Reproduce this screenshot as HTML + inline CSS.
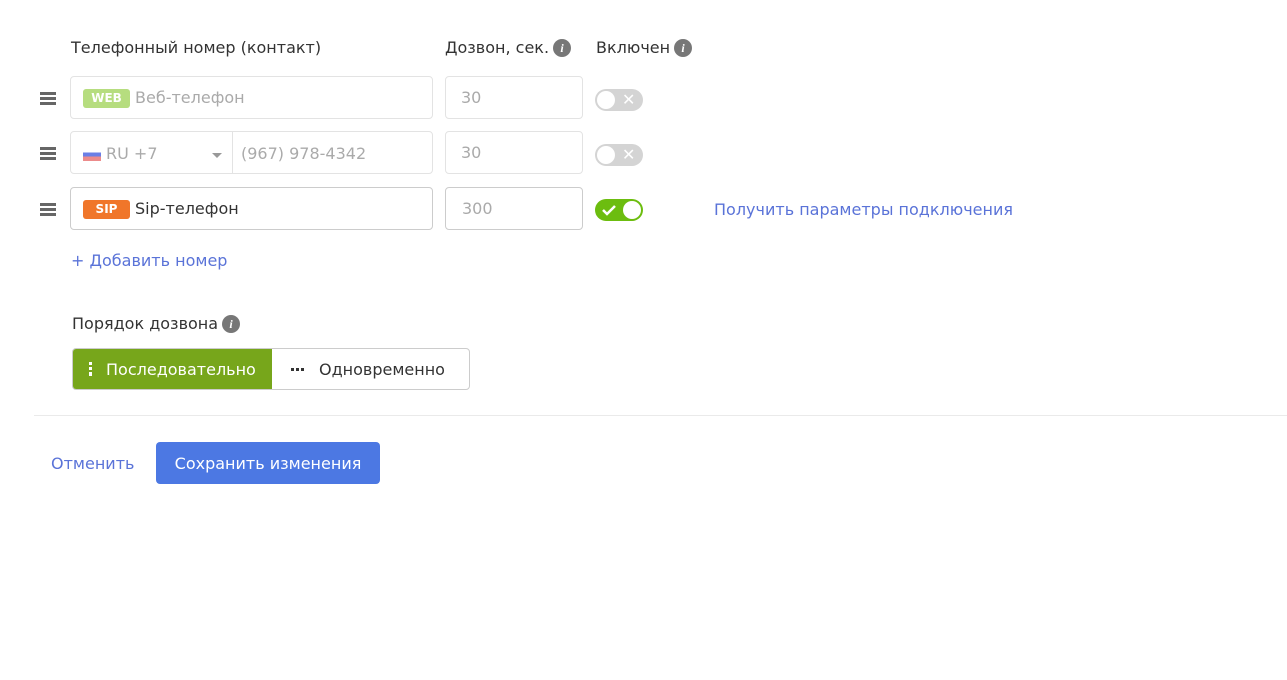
<!DOCTYPE html>
<html><head><meta charset="utf-8"><style>
body{margin:0;width:1287px;height:680px;background:#fff;font-family:"DejaVu Sans","Liberation Sans",sans-serif;font-size:16px;line-height:20px;color:#333;position:relative;overflow:hidden}
.a{position:absolute}
.info{display:inline-block;width:18px;height:18px;border-radius:50%;background:#777;color:#fff;font:italic bold 12px "Liberation Serif",serif;text-align:center;line-height:18px;vertical-align:1px}
.inp{position:absolute;border:1px solid #e3e3e3;border-radius:4px;box-sizing:border-box;height:43px;line-height:42px;color:#aaa}
.handle{position:absolute;left:40px;width:16px;height:12px}
.handle i{display:block;height:3px;background:#666;margin-bottom:2px}
.tag{display:inline-block;color:#fff;font-weight:bold;font-size:12px;border-radius:3px;width:47px;height:19px;line-height:19px;text-align:center;vertical-align:1px;margin-right:5px}
.tog{position:absolute;left:595px;width:48px;height:22px;border-radius:11px;background:#d4d4d4}
.tog b{position:absolute;top:2px;width:18px;height:18px;border-radius:50%;background:#fff}
</style></head><body>
<div class="a" style="left:71px;top:38px">Телефонный номер (контакт)</div>
<div class="a" style="left:445px;top:38px">Дозвон, сек.<span class="info" style="margin-left:4px">i</span></div>
<div class="a" style="left:596px;top:38px">Включен<span class="info" style="margin-left:4px">i</span></div>

<div class="handle" style="top:92px"><i></i><i></i><i></i></div>
<div class="handle" style="top:147px"><i></i><i></i><i></i></div>
<div class="handle" style="top:203px"><i></i><i></i><i></i></div>

<div class="inp" style="left:70px;top:76px;width:363px;padding-left:12px"><span class="tag" style="background:#b6dd7f">WEB</span>Веб-телефон</div>
<div class="inp" style="left:70px;top:131px;width:363px"></div>
<div class="a" style="left:232px;top:132px;width:1px;height:41px;background:#e3e3e3"></div>
<div class="a" style="left:83px;top:148px;width:18px;height:13px;background:linear-gradient(#fff 0 33%,#6a7fe6 33% 66%,#ec8b8b 66%)"></div>
<div class="a" style="left:106px;top:144px;color:#aaa">RU +7</div>
<div class="a" style="left:212px;top:153px;width:0;height:0;border-left:5px solid transparent;border-right:5px solid transparent;border-top:5px solid #999"></div>
<div class="a" style="left:241px;top:144px;color:#aaa">(967) 978-4342</div>
<div class="inp" style="left:70px;top:187px;width:363px;padding-left:12px;border-color:#ccc;color:#333"><span class="tag" style="background:#f0762a">SIP</span>Sip-телефон</div>

<div class="inp" style="left:445px;top:76px;width:138px;padding-left:15px">30</div>
<div class="inp" style="left:445px;top:131px;width:138px;padding-left:15px">30</div>
<div class="inp" style="left:445px;top:187px;width:138px;padding-left:16px;border-color:#ccc">300</div>

<div class="tog" style="top:89px"><b style="left:2px"></b><span class="a" style="left:27px;top:0;color:#fff;font-size:16px;line-height:22px;font-weight:bold">✕</span></div>
<div class="tog" style="top:144px"><b style="left:2px"></b><span class="a" style="left:27px;top:0;color:#fff;font-size:16px;line-height:22px;font-weight:bold">✕</span></div>
<div class="tog" style="top:199px;background:#6cbd0f"><b style="left:28px"></b><svg class="a" style="left:7px;top:5px" width="14" height="12"><path d="M1 6l4 4 8-8" stroke="#fff" stroke-width="2.5" fill="none"/></svg></div>

<div class="a" style="left:714px;top:200px;color:#5a73d8">Получить параметры подключения</div>
<div class="a" style="left:71px;top:251px;color:#5a73d8">+ Добавить номер</div>
<div class="a" style="left:72px;top:314px">Порядок дозвона<span class="info" style="margin-left:4px">i</span></div>

<div class="a" style="left:72px;top:348px;width:398px;height:42px;border:1px solid #ccc;border-radius:4px;box-sizing:border-box;overflow:hidden">
<div class="a" style="left:0;top:0;width:199px;height:42px;background:#77a61b;color:#fff;line-height:41px"><span style="position:absolute;left:16px;top:13px;width:3px;height:14px;background:linear-gradient(#fff 0 3px,transparent 3px 5px,#fff 5px 8px,transparent 8px 10px,#fff 10px)"></span><span style="position:absolute;left:33px">Последовательно</span></div>
<div class="a" style="left:218px;top:19px;width:14px;height:3px;background:linear-gradient(90deg,#333 0 3px,transparent 3px 5px,#333 5px 8px,transparent 8px 10px,#333 10px 13px,transparent 13px)"></div>
<div class="a" style="left:246px;top:0;line-height:41px">Одновременно</div>
</div>

<div class="a" style="left:34px;top:415px;width:1253px;height:1px;background:#eaeaea"></div>
<div class="a" style="left:51px;top:454px;color:#5a73d8">Отменить</div>
<div class="a" style="left:156px;top:442px;width:224px;height:42px;background:#4c78e3;border-radius:4px;color:#fff;text-align:center;line-height:43px">Сохранить изменения</div>
</body></html>
